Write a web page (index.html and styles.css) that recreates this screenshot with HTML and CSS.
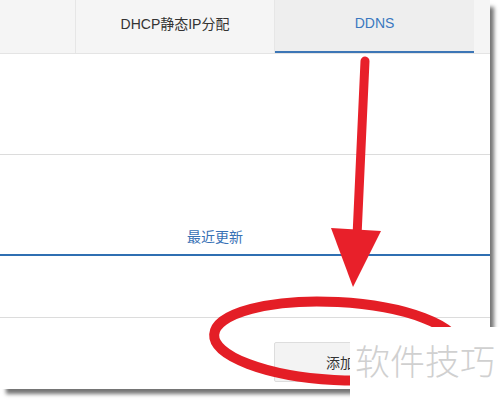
FILE: index.html
```html
<!DOCTYPE html>
<html lang="zh-CN">
<head>
    <meta charset="UTF-8">
    <meta name="viewport" content="width=device-width, initial-scale=1.0">
    <title>DDNS</title>
    <link rel="stylesheet" href="styles.css">
</head>
<body>
    <div class="stage">
        <div class="panel">
            <div class="tabs">
                <div class="tabLead"></div>
                <div class="tab">DHCP静态IP分配</div>
                <div class="tab active">DDNS</div>
                <div class="tabRest"></div>
            </div>
            <div class="blank blankTop"></div>
            <div class="recent">
                <span class="recentLabel">最近更新</span>
            </div>
            <div class="blank blankBottom"></div>
            <div class="footer">
                <button class="addBtn">添加</button>
            </div>
        </div>
        <svg class="marks" width="500" height="400" viewBox="0 0 500 400">
            <line x1="365" y1="61" x2="357" y2="236" stroke="#e8202a" stroke-width="9" stroke-linecap="round"/>
            <polygon points="331,228 381,231 353,287" fill="#e8202a"/>
            <ellipse cx="336" cy="341" rx="122" ry="39" fill="none" stroke="#e41e26" stroke-width="10" transform="rotate(3 336 341)"/>
        </svg>
        <div class="watermark">软件技巧</div>
    </div>
</body>
</html>
```

FILE: styles.css
```css
html, body {
    margin: 0;
    padding: 0;
    background-color: white;
    font-family: "Liberation Sans", "Noto Sans CJK SC", sans-serif;
}
div.stage {
    position: relative;
    width: 500px;
    height: 400px;
    overflow: hidden;
}
div.panel {
    width: 490px;
    height: 389px;
    background-color: white;
    box-shadow: 5px 6px 4px -1px rgba(0, 0, 0, .55);
    display: flex;
    flex-direction: column;
}
div.tabs {
    height: 54px;
    box-sizing: border-box;
    display: flex;
    background-color: #f5f5f5;
    border-bottom: 1px solid #e4e4e4;
    flex-shrink: 0;
}
div.tabLead {
    width: 76px;
    box-sizing: border-box;
    border-right: 1px solid #e6e6e6;
}
div.tab {
    width: 199px;
    box-sizing: border-box;
    display: flex;
    align-items: center;
    justify-content: center;
    padding-bottom: 8px;
    font-size: 14px;
    color: #333;
}
div.tab:not(.active) {
    border-right: 1px solid #e6e6e6;
}
div.tab.active {
    background-color: #eeeeee;
    color: #3a78c0;
    border-bottom: 2px solid #3c76b6;
    padding-bottom: 6px;
}
div.tabRest {
    flex: 1;
}
div.blank {
    box-sizing: border-box;
    border-bottom: 1px solid #dcdcdc;
    flex-shrink: 0;
}
div.blankTop {
    height: 101px;
}
div.blankBottom {
    height: 62px;
}
div.recent {
    height: 101px;
    box-sizing: border-box;
    border-bottom: 2px solid #2f6fb2;
    padding: 71px 0 0 187px;
    flex-shrink: 0;
}
span.recentLabel {
    font-family: "Noto Sans CJK SC", sans-serif;
    font-size: 14px;
    line-height: 20px;
    color: #3771b5;
}
div.footer {
    flex: 1;
    padding: 24px 0 0 274px;
}
button.addBtn {
    width: 132px;
    height: 40px;
    background-color: #f3f3f3;
    border: 1px solid #dddddd;
    border-radius: 2px;
    font-family: "Noto Sans CJK SC", sans-serif;
    font-size: 14px;
    color: #333;
    padding: 0;
}
svg.marks {
    position: absolute;
    top: 0;
    left: 0;
    pointer-events: none;
}
div.watermark {
    position: absolute;
    left: 350px;
    top: 327px;
    width: 150px;
    height: 73px;
    background-color: white;
    box-sizing: border-box;
    padding: 8px 0 0 5px;
    font-family: "Noto Sans CJK SC", sans-serif;
    font-size: 35px;
    font-weight: 300;
    line-height: 50px;
    color: #d0d0d0;
    white-space: nowrap;
}
```
